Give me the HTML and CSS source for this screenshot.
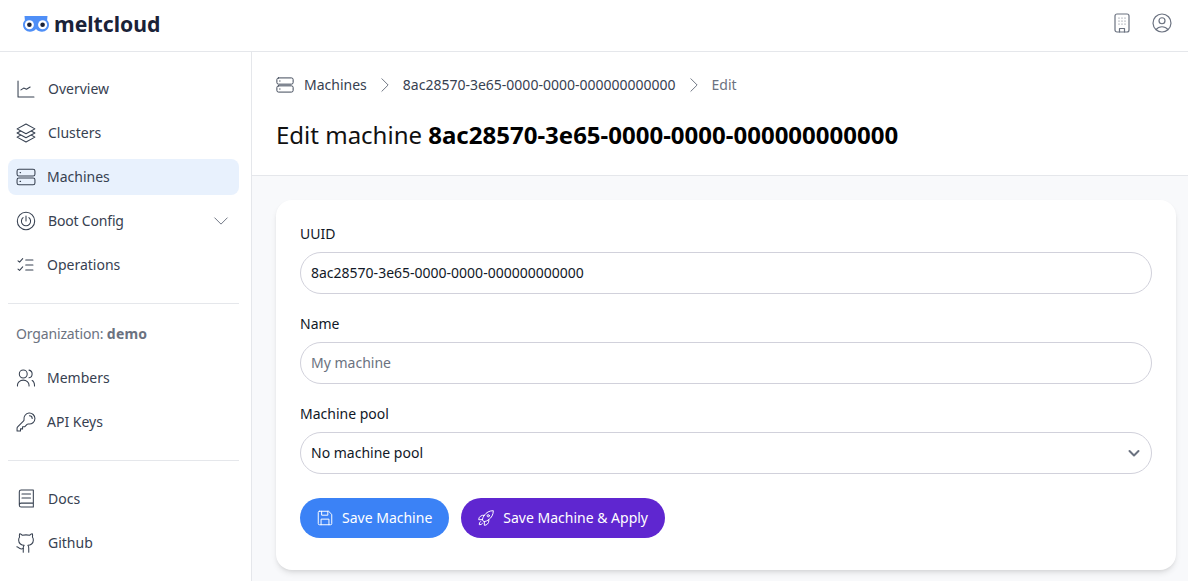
FILE: index.html
```html
<!DOCTYPE html>
<html lang="en">
<head>
<meta charset="utf-8">
<title>meltcloud</title>
<link rel="stylesheet" href="styles.css">
</head>
<body>
<header class="topbar">
  <a class="logo">
    <svg class="logo-mark" viewBox="0 0 28 18" width="28" height="18">
      <path d="M2.500 1h23l-.4 4.300c1.200 1.200 1.900 2.800 1.900 4.500 0 3.900-3.100 7-7 7-2.300 0-4.500-1-6-2.800-1.500 1.800-3.700 2.800-6 2.800-3.900 0-7-3.100-7-7 0-1.700.7-3.300 1.900-4.500z" fill="#4f8ff7"/>
      <circle cx="7.400" cy="9.700" r="4.500" fill="#fff"/><circle cx="20.600" cy="9.700" r="4.500" fill="#fff"/>
      <circle cx="7.400" cy="9.700" r="2.300" fill="#1a2238"/><circle cx="20.600" cy="9.700" r="2.300" fill="#1a2238"/>
    </svg>
    <span class="logo-text">meltcloud</span>
  </a>
  <div class="top-icons">
    <svg class="ic ic-top" viewBox="0 0 24 24"><rect x="5" y="3" width="14" height="18" rx="2"/><path d="M9.500 21v-3.500h5V21M9 7h.01M12 7h.01M15 7h.01M9 10h.01M12 10h.01M15 10h.01M9 13h.01M12 13h.01M15 13h.01"/></svg>
    <svg class="ic ic-top" viewBox="0 0 24 24"><path d="M17.982 18.725A7.488 7.488 0 0 0 12 15.750a7.488 7.488 0 0 0-5.982 2.975m11.963 0a9 9 0 1 0-11.963 0m11.963 0A8.966 8.966 0 0 1 12 21a8.966 8.966 0 0 1-5.982-2.275M15 9.750a3 3 0 1 1-6 0 3 3 0 0 1 6 0Z"/></svg>
  </div>
</header>
<div class="shell">
  <aside class="sidebar">
    <nav class="nav">
      <a class="item"><svg class="ic" viewBox="0 0 24 24"><path d="M3.300 3.300V20.700H20.700M6.500 13l3-2 3 1.300 4-2.500"/></svg><span class="lbl">Overview</span></a>
      <a class="item"><svg class="ic" viewBox="0 0 24 24"><path d="M6.429 9.750 2.250 12l4.179 2.250m0-4.500 5.571 3 5.571-3m-11.142 0L2.250 7.500 12 2.250l9.750 5.250-4.179 2.250m0 0L21.750 12l-4.179 2.250m0 0 4.179 2.250L12 21.750 2.250 16.500l4.179-2.250m11.142 0-5.571 3-5.571-3"/></svg><span class="lbl">Clusters</span></a>
      <a class="item active"><svg class="ic" viewBox="0 0 24 24"><rect x="2.250" y="3.500" width="19.500" height="7.500" rx="2"/><rect x="2.250" y="13" width="19.500" height="7.500" rx="2"/><path d="M5.500 7.200h.6M5.500 16.800h.6"/></svg><span class="lbl lbl-tight">Machines</span></a>
      <a class="item"><svg class="ic" viewBox="0 0 24 24"><path d="M12 6.500v5.500"/><path d="M8.800 8.300a5 5 0 1 0 6.400 0"/><circle cx="12" cy="12" r="9.500"/></svg><span class="lbl lbl-narrow">Boot Config</span><svg class="ic chev" viewBox="0 0 24 24"><path d="m19.500 8.250-7.500 7.500-7.500-7.500"/></svg></a>
      <a class="item"><svg class="ic" viewBox="0 0 24 24"><path d="M11.700 6.500h7.900M11.700 12h7.900M11.700 17.500h7.900M3.300 7.400l1.700 1.500 3.400-3.800M3.300 16.400l1.700 1.500 3.400-3.800"/></svg><span class="lbl lbl-tight">Operations</span></a>
    </nav>
    <hr class="rule">
    <p class="org">Organization: <b>demo</b></p>
    <nav class="nav nav-org">
      <a class="item"><svg class="ic" viewBox="0 0 24 24"><circle cx="9" cy="7.600" r="4.300"/><path d="M2.700 20.700v-1c0-3 2.800-5.400 6.300-5.400s6.300 2.400 6.300 5.400v1M15.300 3.400a4.300 4.300 0 0 1 0 8.400M18.700 14.800c1.800.9 2.600 2.800 2.600 5.900"/></svg><span class="lbl lbl-tight">Members</span></a>
      <a class="item"><svg class="ic" viewBox="0 0 24 24"><path d="M15.750 5.250a3 3 0 0 1 3 3m3 0a6 6 0 0 1-7.029 5.912c-.563-.097-1.159.026-1.563.43L10.500 17.250H8.250v2.250H6v2.250H2.250v-2.818c0-.597.237-1.170.659-1.591l6.499-6.499c.404-.404.527-1 .43-1.563A6 6 0 1 1 21.750 8.250Z"/></svg><span class="lbl lbl-tight">API Keys</span></a>
    </nav>
    <hr class="rule rule-low">
    <nav class="nav">
      <a class="item"><svg class="ic" viewBox="0 0 24 24"><path d="M4.700 18.500V4.200a2 2 0 0 1 2-2H20v18.500H6.700a2 2 0 0 1-2-2Zm0 0a2 2 0 0 1 2-2H20M7.600 6.500H17M7.600 10.900H17"/></svg><span class="lbl">Docs</span></a>
      <a class="item"><svg class="ic" viewBox="0 0 24 24"><path d="M15 22v-4a4.800 4.800 0 0 0-1-3.500c3 0 6-2 6-5.500.080-1.250-.27-2.480-1-3.500.28-1.150.28-2.350 0-3.500 0 0-1 0-3 1.500-2.640-.5-5.360-.5-8 0C6 2 5 2 5 2c-.3 1.150-.3 2.350 0 3.500A5.403 5.403 0 0 0 4 9c0 3.500 3 5.500 6 5.500-.39.490-.68 1.050-.85 1.650-.17.600-.22 1.230-.15 1.850v4"/><path d="M9 18c-4.510 2-5-2-7-2"/></svg><span class="lbl">Github</span></a>
    </nav>
  </aside>
  <main class="main">
    <section class="page-head">
      <ol class="crumbs">
        <li class="crumb"><svg class="ic crumb-ic" viewBox="0 0 24 24"><rect x="2.250" y="3.500" width="19.500" height="7.500" rx="2"/><rect x="2.250" y="13" width="19.500" height="7.500" rx="2"/><path d="M5.500 7.200h.6M5.500 16.800h.6"/></svg><span class="crumb-first">Machines</span></li>
        <li class="crumb"><svg class="ic sep" viewBox="0 0 24 24"><path d="m8.250 4.500 7.500 7.500-7.500 7.500"/></svg><span>8ac28570-3e65-0000-0000-000000000000</span></li>
        <li class="crumb crumb-muted"><svg class="ic sep" viewBox="0 0 24 24"><path d="m8.250 4.500 7.500 7.500-7.500 7.500"/></svg><span>Edit</span></li>
      </ol>
      <h1 class="title">Edit machine <b>8ac28570-3e65-0000-0000-000000000000</b></h1>
    </section>
    <section class="content">
      <form class="card">
        <label class="field"><span class="field-label">UUID</span><input class="control control-text" type="text" value="8ac28570-3e65-0000-0000-000000000000"></label>
        <label class="field"><span class="field-label">Name</span><input class="control control-text" type="text" placeholder="My machine"></label>
        <label class="field"><span class="field-label">Machine pool</span>
          <span class="select-wrap"><select class="control select"><option>No machine pool</option></select>
          <svg class="select-chev" viewBox="0 0 20 20"><path d="m5.500 8 4.500 4.500L14.500 8"/></svg></span></label>
        <div class="actions">
          <button class="btn btn-blue" type="button"><svg class="ic btn-ic" viewBox="0 0 24 24"><path d="M4.500 3h12.300L21 7.200V19.500A1.500 1.500 0 0 1 19.500 21h-15A1.500 1.500 0 0 1 3 19.500v-15A1.500 1.500 0 0 1 4.500 3Z"/><path d="M7.500 3v5.250h8.250V3M6.750 21v-7.500h10.500V21"/></svg>Save Machine</button>
          <button class="btn btn-purple" type="button"><svg class="ic btn-ic" viewBox="0 0 24 24"><path d="M15.590 14.370q.159.666.160 1.380a6 6 0 0 1-6 6v-4.800m5.840-2.580a14.980 14.980 0 0 0 6.160-12.120A14.980 14.980 0 0 0 9.631 8.410m5.959 5.960a14.926 14.926 0 0 1-5.841 2.580m-.119-8.540a6 6 0 0 0-7.381 5.840h4.800m2.581-5.840a14.927 14.927 0 0 0-2.580 5.840m2.699 2.700a15.100 15.100 0 0 1-.311.06 15.090 15.090 0 0 1-2.448-2.448 14.900 14.900 0 0 1 .06-.312m-2.240 2.390a4.493 4.493 0 0 0-1.757 4.306 4.493 4.493 0 0 0 4.306-1.758M16.500 9a1.500 1.500 0 1 1-3 0 1.500 1.500 0 0 1 3 0Z"/></svg>Save Machine &amp; Apply</button>
        </div>
      </form>
    </section>
  </main>
</div>
</body>
</html>
```
FILE: styles.css
```css
* { box-sizing: border-box; }
html, body { height: 100%; }
body {
  margin: 0;
  overflow: hidden;
  background: #fff;
  color: #1f2937;
  font: 14px/20px "Noto Sans", "Open Sans", sans-serif;
}
a { color: inherit; text-decoration: none; }

.ic {
  width: 22px;
  height: 22px;
  flex: none;
  fill: none;
  stroke: currentColor;
  stroke-width: 1.15;
  stroke-linecap: round;
  stroke-linejoin: round;
}

.topbar {
  height: 52px;
  display: flex;
  align-items: center;
  justify-content: space-between;
  padding: 0 14px 6px 22px;
  border-bottom: 1px solid #e5e7eb;
}
.logo { display: flex; align-items: center; gap: 4px; }
.logo-mark { display: block; margin-top: 2px; }
.logo-text { padding-top: 2px; font-size: 21.2px; line-height: 28px; font-weight: 700; color: #1a2238; }
.top-icons { display: flex; gap: 16px; color: #6b7280; }
.ic-top { width: 24px; height: 24px; stroke-width: 1.2; }

.shell { display: flex; height: 529px; }
.sidebar {
  width: 252px;
  flex: none;
  padding: 19px 12px 0 8px;
  border-right: 1px solid #e5e7eb;
}
.nav { display: flex; flex-direction: column; gap: 8px; }
.nav-org { margin-top: 16px; }
.item {
  height: 36px;
  display: flex;
  align-items: center;
  gap: 11px;
  padding: 0 7px;
  border-radius: 8px;
  color: #374151;
}
.item.active { background: #e8f1fd; }
.lbl { flex: 1; }
.lbl-tight { margin-left: -1px; }
.lbl-narrow { letter-spacing: -.18px; }
.chev { width: 20px; height: 20px; color: #6b7280; margin-right: 1px; }
.rule { margin: 20px 0 0; border: 0; border-top: 1px solid #e5e7eb; }
.rule-low { margin: 20px 0 20px; }
.org { margin: 20px 0 0; padding-left: 8px; color: #6b7280; letter-spacing: -.15px; }
.org b { font-weight: 700; letter-spacing: .2px; }

.main { flex: 1; min-width: 0; background: #f8f9fb; }
.page-head {
  height: 124px;
  padding: 23px 24px 0;
  background: #fff;
  border-bottom: 1px solid #e5e7eb;
}
.crumbs {
  list-style: none;
  margin: 0;
  padding: 0;
  display: flex;
  align-items: center;
  gap: 8px;
  color: #374151;
}
.crumb { display: flex; align-items: center; gap: 8px; }
.crumb-ic { width: 20px; height: 20px; margin-left: -1px; }
.crumb-first { margin-left: 1px; }
.crumb-muted { color: #6b7280; }
.sep { width: 20px; height: 20px; color: #6b7280; }
.title {
  margin: 24px 0 0;
  font-size: 24px;
  line-height: 32px;
  font-weight: 400;
  color: #111;
}
.title b { font-weight: 700; color: #000; }

.content { padding: 24px 12px 0 24px; }
.card {
  height: 370px;
  padding: 24px;
  background: #fff;
  border-radius: 16px;
  box-shadow: 0 4px 6px -1px rgba(0,0,0,.1), 0 2px 4px -2px rgba(0,0,0,.1);
  display: flex;
  flex-direction: column;
  gap: 20px;
}
.field { display: block; }
.field-label { display: block; margin-bottom: 8px; line-height: 20px; color: #111827; }
.control {
  display: block;
  width: 100%;
  height: 42px;
  padding: 0 10px;
  border: 1px solid #d1d1db;
  border-radius: 21px;
  background: #fff;
  color: #111827;
  font: inherit;
  outline: none;
}
.control-text { padding-bottom: 2px; }
.control::placeholder { color: #6b7280; opacity: 1; }
.select-wrap { display: block; position: relative; }
.select { appearance: none; -webkit-appearance: none; }
.select-chev {
  position: absolute;
  top: 11px;
  right: 8px;
  width: 20px;
  height: 20px;
  fill: none;
  stroke: #6b7280;
  stroke-width: 2;
  stroke-linecap: round;
  stroke-linejoin: round;
}
.actions { display: flex; gap: 12px; margin-top: 4px; }
.btn {
  height: 40px;
  display: flex;
  align-items: center;
  gap: 8px;
  padding: 0 17px 0 16px;
  border: 0;
  border-radius: 20px;
  color: #fff;
  font: inherit;
}
.btn-ic { width: 18px; height: 18px; stroke-width: 1.3; }
.btn-blue { background: #3b82f6; }
.btn-purple { background: #5f26d0; }
```
